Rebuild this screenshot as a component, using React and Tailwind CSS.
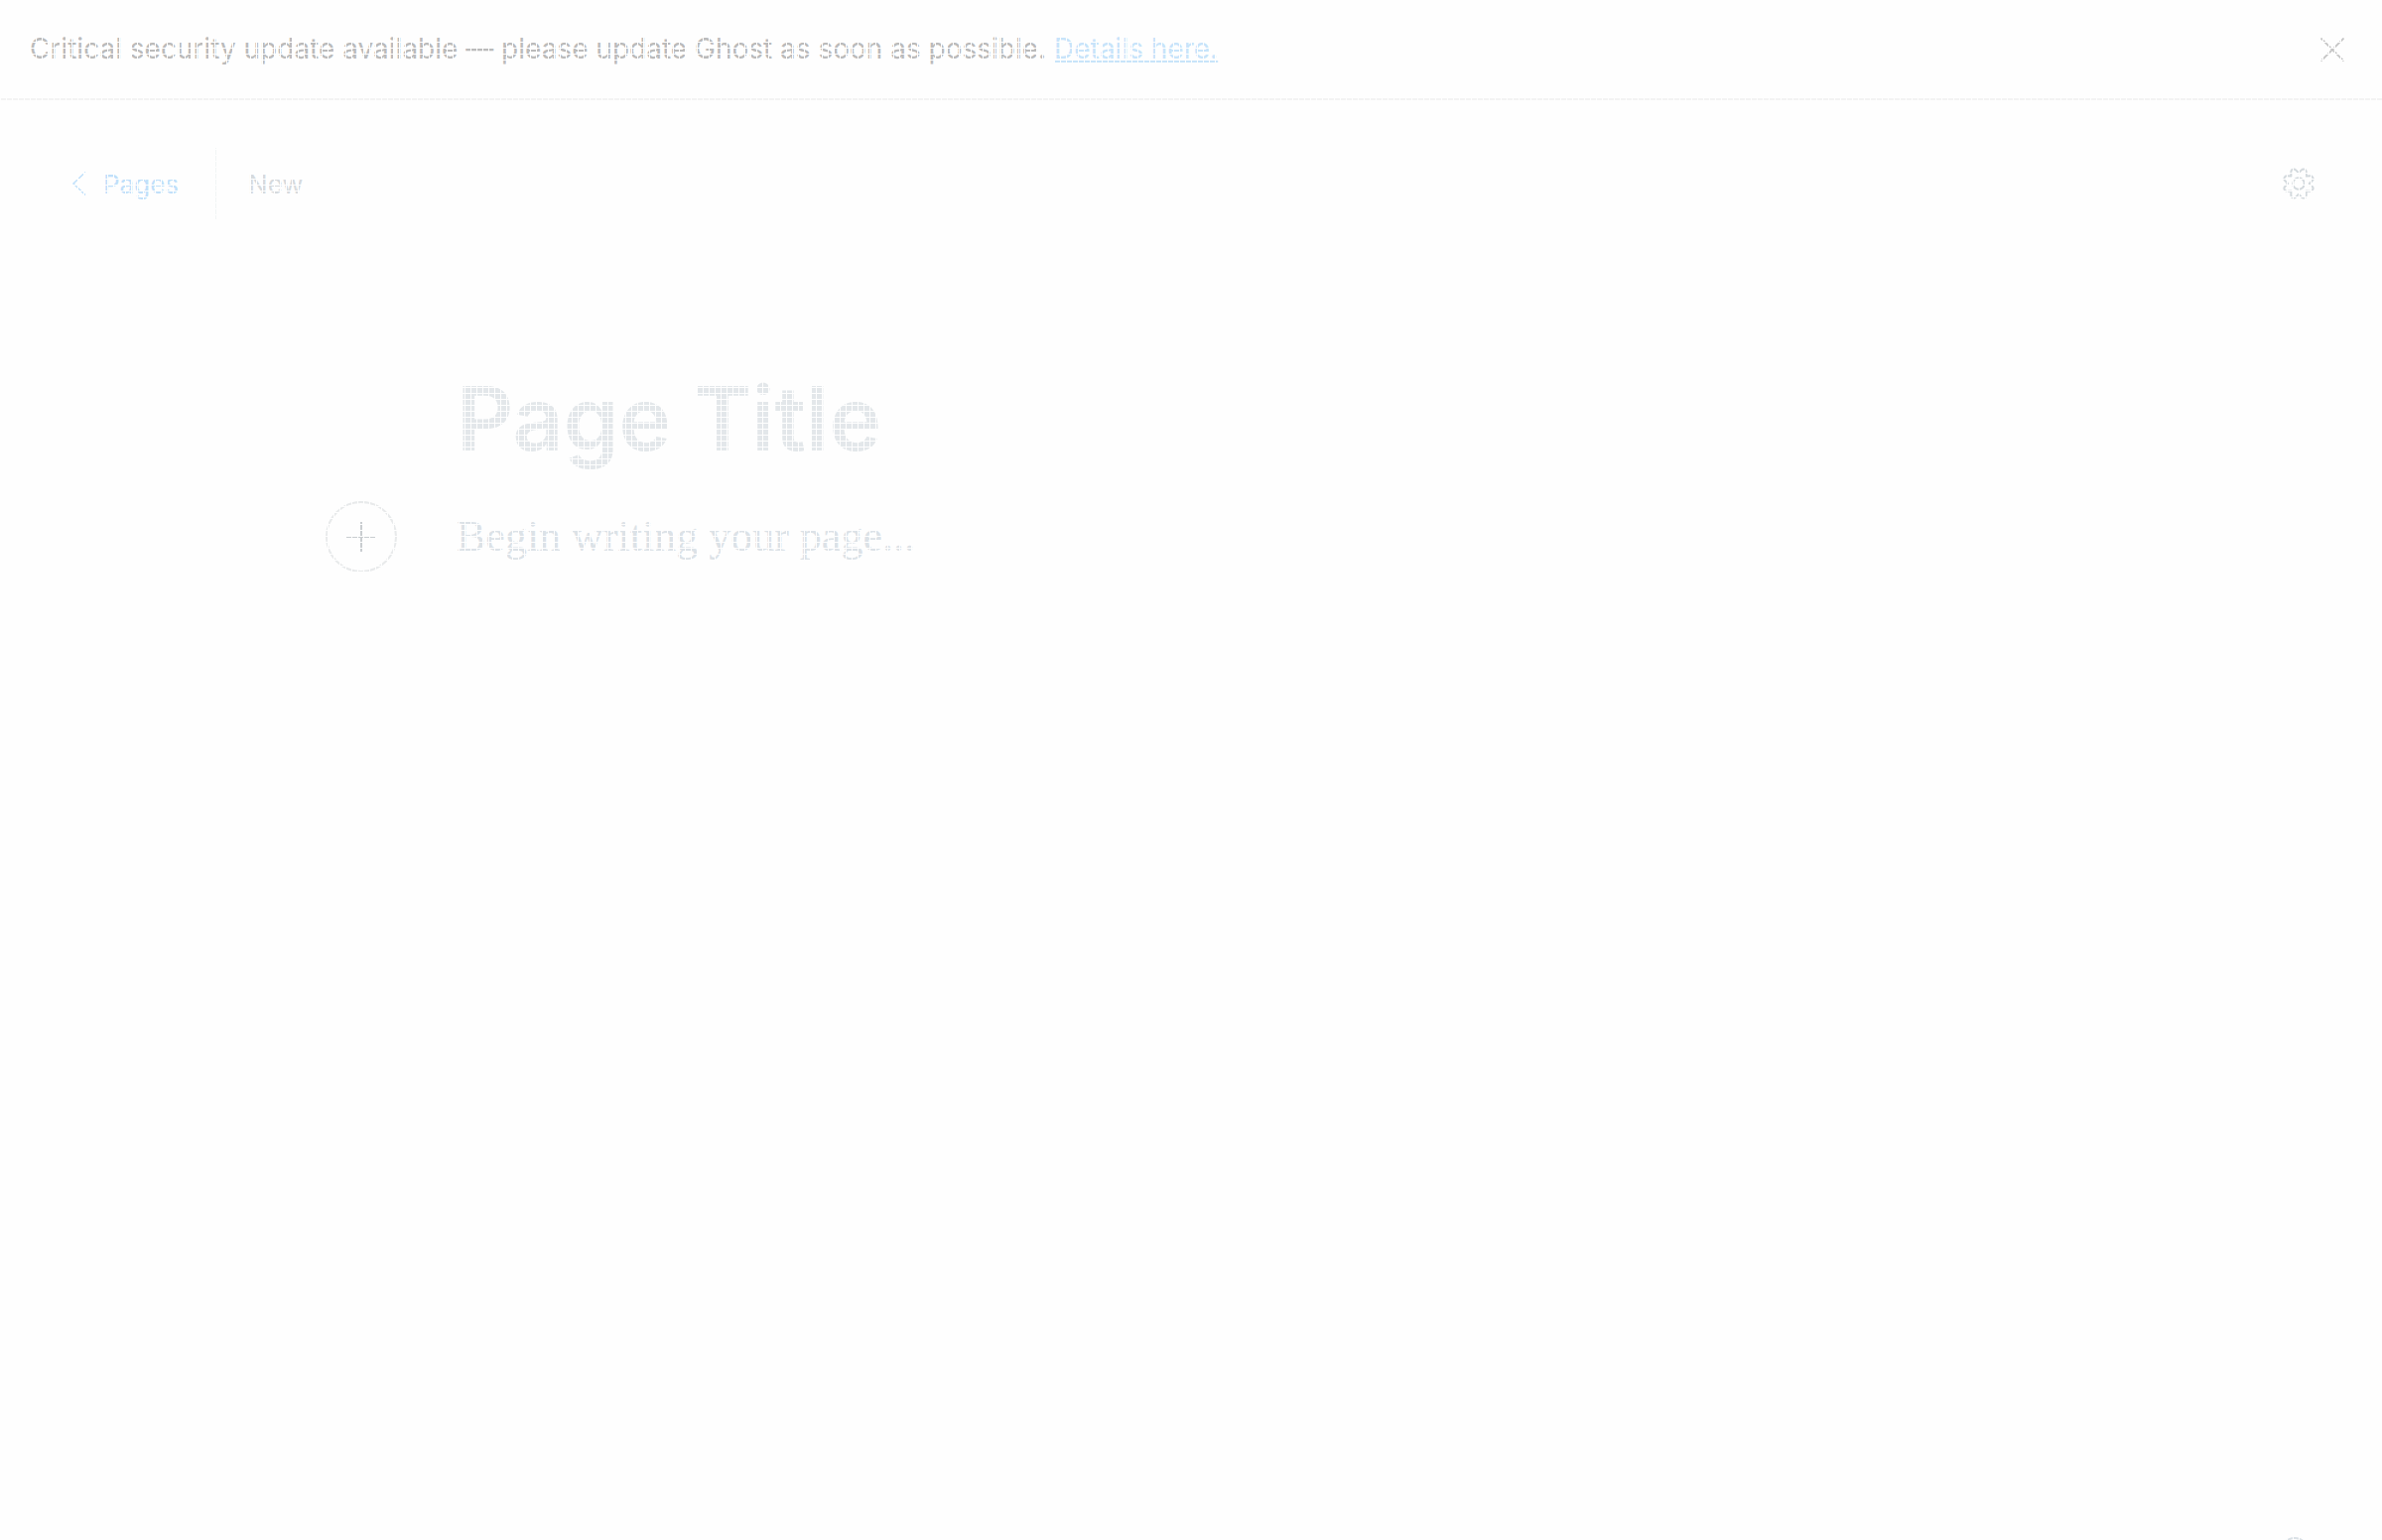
function CloseIcon() {
  return (
    <svg className="size-6" viewBox="0 0 24 24" fill="none" stroke="currentColor" strokeWidth="1.8" aria-hidden="true">
      <path d="M0.5 0.5 23.5 23.5M23.5 0.5 0.5 23.5" />
    </svg>
  );
}

function ChevronIcon() {
  return (
    <svg className="h-6 w-4" viewBox="0 0 16 24" fill="none" stroke="currentColor" strokeWidth="1.5" aria-hidden="true">
      <path d="M14 0.5 2 12 14 23.5" />
    </svg>
  );
}

function GearIcon() {
  return (
    <svg className="size-8" viewBox="0 0 32 32" fill="none" stroke="currentColor" strokeWidth="2" strokeLinejoin="round" aria-hidden="true">
      <circle cx="16" cy="16" r="5.8" />
      <path d="M13.2 2.4 16 5.2 18.8 2.4C20.6 .4 23.8 1.7 23.7 4.4L23.6 8.4 27.6 8.3C30.3 8.2 31.6 11.4 29.6 13.2L26.8 16 29.6 18.8C31.6 20.6 30.3 23.8 27.6 23.7L23.6 23.6 23.7 27.6C23.8 30.3 20.6 31.6 18.8 29.6L16 26.8 13.2 29.6C11.4 31.6 8.2 30.3 8.3 27.6L8.4 23.6 4.4 23.7C1.7 23.8 .4 20.6 2.4 18.8L5.2 16 2.4 13.2C.4 11.4 1.7 8.2 4.4 8.3L8.4 8.4 8.3 4.4C8.2 1.7 11.4 .4 13.2 2.4Z" />
    </svg>
  );
}

function PlusIcon() {
  return (
    <svg className="size-8" viewBox="0 0 32 32" fill="none" stroke="currentColor" strokeWidth="2" aria-hidden="true">
      <path d="M16 1V31M1 16H31" />
    </svg>
  );
}

function UpdateBanner() {
  return (
    <aside className="flex items-center justify-between border-b-2 border-[#f3f3f3] py-7 pr-[38px] pl-[30px]">
      <p className="text-[28px] leading-[43px] text-[#bbbbbb]">
        Critical security update available — please update Ghost as soon as possible.{" "}
        <a href="#details" className="text-[#c8e4fa] underline decoration-2 underline-offset-2">
          Details here.
        </a>
      </p>
      <button type="button" aria-label="Close notification" className="text-[#c4c4c4]">
        <CloseIcon />
      </button>
    </aside>
  );
}

function EditorHeader() {
  return (
    <header className="flex items-center justify-between px-[68px] py-12">
      <nav className="flex items-center">
        <a href="#pages" className="flex items-center gap-4 pr-9 pl-1 text-[26px] text-[#c0e0fa]">
          <ChevronIcon />
          Pages
        </a>
        <div className="flex h-18 items-center border-l-2 border-[#f1f5f5] pl-8 text-[26px] text-[#d6dadd]">New</div>
      </nav>
      <button type="button" aria-label="Page settings" className="text-[#d3d9dd]">
        <GearIcon />
      </button>
    </header>
  );
}

function Editor() {
  return (
    <main className="mx-auto w-full max-w-[1480px] pt-24">
      <input
        type="text"
        aria-label="Page title"
        placeholder="Page Title"
        className="block h-[114px] w-full bg-transparent text-[89px] font-semibold outline-none placeholder:text-[#e3e7ea] placeholder:opacity-100"
      />
      <div className="relative mt-[26px]">
        <button
          type="button"
          aria-label="Add a card"
          className="absolute top-0 right-full mr-[60px] flex size-18 items-center justify-center rounded-full border-2 border-[#e8eaeb] text-[#c9cdd0]"
        >
          <PlusIcon />
        </button>
        <textarea
          aria-label="Page content"
          placeholder="Begin writing your page..."
          rows={1}
          className="block w-full resize-none overflow-hidden bg-transparent font-['Liberation_Serif',serif] text-[44px] leading-[72px] outline-none placeholder:text-[#dce2e7] placeholder:opacity-100"
        />
      </div>
    </main>
  );
}

export default function App() {
  return (
    <div className="min-h-screen bg-[#fefefe] font-['Inter',sans-serif]">
      <UpdateBanner />
      <EditorHeader />
      <Editor />
      <button
        type="button"
        aria-label="Help"
        className="fixed right-[74px] -bottom-[25px] size-7 rounded-full border-2 border-[#dbe1e6]"
      />
      <div
        aria-hidden="true"
        className="pointer-events-none fixed inset-0 bg-[linear-gradient(to_right,#fefefe_1px,transparent_1px),linear-gradient(to_bottom,#fefefe_1px,transparent_1px)] bg-size-[6px_6px]"
      />
    </div>
  );
}
